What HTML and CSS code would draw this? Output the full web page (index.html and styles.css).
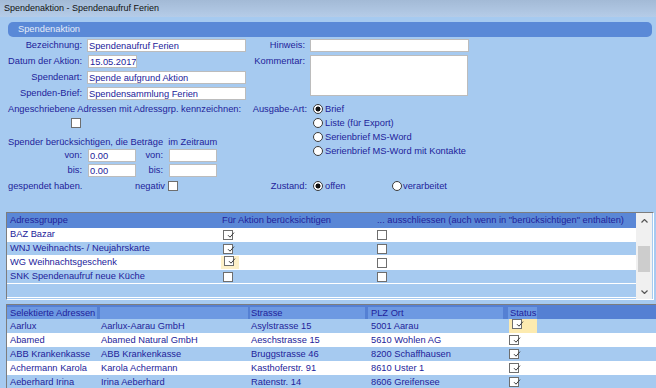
FILE: index.html
```html
<!DOCTYPE html>
<html lang="de">

<head>
    <meta charset="utf-8">
    <title>Spendenaktion - Spendenaufruf Ferien</title>
    <link rel="stylesheet" href="styles.css">
</head>

<body>

    <div class="titlebar">Spendenaktion - Spendenaufruf Ferien</div>

    <div class="section-bar">Spendenaktion</div>

    <!-- Kopfdaten -->
    <div class="top-grid">
        <label class="lbl">Bezeichnung:</label>
        <input class="inp wide" type="text" value="Spendenaufruf Ferien">
        <label class="lbl">Hinweis:</label>
        <input class="inp wide" type="text" value="">

        <label class="lbl">Datum der Aktion:</label>
        <input class="inp datum" type="text" value="15.05.2017">
        <label class="lbl">Kommentar:</label>
        <textarea class="inp kommentar"></textarea>

        <label class="lbl">Spendenart:</label>
        <input class="inp wide" type="text" value="Spende aufgrund Aktion">
        <span></span>

        <label class="lbl">Spenden-Brief:</label>
        <input class="inp wide" type="text" value="Spendensammlung Ferien">
        <span></span>
    </div>

    <div class="middle">
        <div class="mid-left">
            <div class="note">Angeschriebene Adressen mit Adressgrp. kennzeichnen:</div>
            <div class="cb-line"><span class="cb"></span></div>
            <div class="note note2">Spender berücksichtigen, die Beträge &nbsp;im Zeitraum</div>
            <div class="range-row">
                <span class="lbl">von:</span>
                <input class="inp small" type="text" value="0.00">
                <span class="lbl lbl2">von:</span>
                <input class="inp small" type="text" value="">
            </div>
            <div class="range-row">
                <span class="lbl">bis:</span>
                <input class="inp small" type="text" value="0.00">
                <span class="lbl lbl2">bis:</span>
                <input class="inp small" type="text" value="">
            </div>
            <div class="neg-row">
                <span class="neg-text">gespendet haben.</span>
                <span>negativ</span>
                <span class="cb"></span>
            </div>
        </div>

        <div class="mid-right">
            <div class="opt-row">
                <span class="opt-label">Ausgabe-Art:</span>
                <span class="rb on"></span><span class="opt-text">Brief</span>
            </div>
            <div class="opt-row">
                <span class="opt-label"></span>
                <span class="rb"></span><span class="opt-text">Liste (für Export)</span>
            </div>
            <div class="opt-row">
                <span class="opt-label"></span>
                <span class="rb"></span><span class="opt-text">Serienbrief MS-Word</span>
            </div>
            <div class="opt-row">
                <span class="opt-label"></span>
                <span class="rb"></span><span class="opt-text">Serienbrief MS-Word mit Kontakte</span>
            </div>
            <div class="opt-row zustand">
                <span class="opt-label">Zustand:</span>
                <span class="opt-item first"><span class="rb on"></span><span class="opt-text">offen</span></span>
                <span class="opt-item"><span class="rb"></span><span class="opt-text tight">verarbeitet</span></span>
            </div>
        </div>
    </div>

    <!-- Adressgruppen -->
    <div class="grid1">
        <div class="g1-main">
            <div class="g1-head">
                <span>Adressgruppe</span>
                <span>Für Aktion berücksichtigen</span>
                <span>... ausschliessen (auch wenn in "berücksichtigen" enthalten)</span>
            </div>
            <div class="g1-row">
                <span>BAZ Bazar</span>
                <span class="cell-cb"><span class="cb"><svg viewBox="0 0 8 8"><path d="M1 4.2l2 2 4-4.6"/></svg></span></span>
                <span class="cell-cb"><span class="cb"></span></span>
            </div>
            <div class="g1-row alt">
                <span>WNJ Weihnachts- / Neujahrskarte</span>
                <span class="cell-cb"><span class="cb"><svg viewBox="0 0 8 8"><path d="M1 4.2l2 2 4-4.6"/></svg></span></span>
                <span class="cell-cb"><span class="cb"></span></span>
            </div>
            <div class="g1-row">
                <span>WG Weihnachtsgeschenk</span>
                <span class="cell-cb"><span class="focus"><span class="cb"><svg viewBox="0 0 8 8"><path d="M1 4.2l2 2 4-4.6"/></svg></span></span></span>
                <span class="cell-cb"><span class="cb"></span></span>
            </div>
            <div class="g1-row alt">
                <span>SNK Spendenaufruf neue Küche</span>
                <span class="cell-cb"><span class="cb"></span></span>
                <span class="cell-cb"><span class="cb"></span></span>
            </div>
            <div class="g1-row alt"></div>
        </div>
        <div class="scrollbar">
            <span class="arrow"><svg viewBox="0 0 7 4"><path d="M0.5 3.5l3-3 3 3"/></svg></span>
            <span class="track"><span class="thumb"></span></span>
            <span class="arrow"><svg viewBox="0 0 7 4"><path d="M0.5 0.5l3 3 3-3"/></svg></span>
        </div>
    </div>

    <!-- Selektierte Adressen -->
    <div class="grid2">
        <div class="g2-head">
            <span class="hc">Selektierte Adressen</span>
            <span class="hc"></span>
            <span class="hc">Strasse</span>
            <span class="hc">PLZ Ort</span>
            <span class="hc">Status</span>
        </div>
        <div class="g2-row alt">
            <span>Aarlux</span><span>Aarlux-Aarau GmbH</span><span>Asylstrasse 15</span><span>5001 Aarau</span>
            <span class="status"><span class="focus2"><span class="cb"><svg viewBox="0 0 8 8"><path d="M1 4.2l2 2 4-4.6"/></svg></span></span></span>
        </div>
        <div class="g2-row">
            <span>Abamed</span><span>Abamed Natural GmbH</span><span>Aeschstrasse 15</span><span>5610 Wohlen AG</span>
            <span class="status"><span class="cb"><svg viewBox="0 0 8 8"><path d="M1 4.2l2 2 4-4.6"/></svg></span></span>
        </div>
        <div class="g2-row alt">
            <span>ABB Krankenkasse</span><span>ABB Krankenkasse</span><span>Bruggstrasse 46</span><span>8200 Schaffhausen</span>
            <span class="status"><span class="cb"><svg viewBox="0 0 8 8"><path d="M1 4.2l2 2 4-4.6"/></svg></span></span>
        </div>
        <div class="g2-row">
            <span>Achermann Karola</span><span>Karola Achermann</span><span>Kasthoferstr. 91</span><span>8610 Uster 1</span>
            <span class="status"><span class="cb"><svg viewBox="0 0 8 8"><path d="M1 4.2l2 2 4-4.6"/></svg></span></span>
        </div>
        <div class="g2-row alt">
            <span>Aeberhard Irina</span><span>Irina Aeberhard</span><span>Ratenstr. 14</span><span>8606 Greifensee</span>
            <span class="status"><span class="cb"><svg viewBox="0 0 8 8"><path d="M1 4.2l2 2 4-4.6"/></svg></span></span>
        </div>
    </div>

</body>

</html>
```

FILE: styles.css
```css
body {
    margin: 0;
    width: 656px;
    height: 388px;
    overflow: hidden;
    background-color: #a6caf0;
    font-family: "Liberation Sans", Arial, sans-serif;
    font-size: 9.3px;
    color: #22229a;
}

.titlebar {
    height: 17px;
    line-height: 16px;
    padding-left: 4px;
    box-sizing: border-box;
    font-size: 9px;
    color: #111;
    background: linear-gradient(#a3bad6, #b5cce8);
}

.section-bar {
    margin: 5px 4px 0 8px;
    height: 15px;
    line-height: 15px;
    padding-left: 10px;
    background-color: #5a89d7;
    color: #e4ebf8;
    border-radius: 5px;
}

/* Kopfdaten */

.top-grid {
    display: grid;
    grid-template-columns: 84px 162px 61px 164px;
    grid-template-rows: 16px 16px 16px 14px;
    padding-top: 2px;
}

.lbl {
    text-align: right;
    padding-right: 2px;
    line-height: 13px;
    white-space: nowrap;
}

.inp {
    display: block;
    box-sizing: border-box;
    height: 13px;
    margin: 0 0 0 3px;
    padding: 0 1px;
    border: 1px solid #bcbcbc;
    background: #fff;
    font: inherit;
    color: inherit;
    line-height: 11px;
    outline: none;
}

.wide {
    width: 159px;
}

.datum {
    width: 49px;
    margin-left: 4px;
    padding: 0 0 0 1px;
}

.kommentar {
    grid-column: 4;
    grid-row: 2 / span 3;
    width: 158px;
    height: 41px;
    resize: none;
}

/* mittlerer Bereich */

.middle {
    display: flex;
    padding-top: 1px;
}

.mid-left {
    width: 246px;
}

.note {
    padding-left: 8px;
    line-height: 14px;
    white-space: nowrap;
}

.note2 {
    margin-top: 5px;
}

.cb-line {
    height: 14px;
    padding: 2px 0 0 71px;
    box-sizing: border-box;
}

.range-row {
    display: flex;
    height: 15px;
}

.range-row .lbl {
    width: 82px;
}

.range-row .lbl2 {
    width: 27px;
}

.small {
    width: 48px;
    margin-left: 4px;
}

.neg-row {
    display: flex;
    align-items: center;
    width: 178px;
    height: 14px;
}

.neg-text {
    padding-left: 8px;
    margin-right: auto;
}

.neg-row .cb {
    margin-left: 3px;
}

.mid-right {
    flex: 1;
}

.opt-row {
    display: flex;
    align-items: center;
    height: 14px;
    white-space: nowrap;
}

.opt-label {
    width: 61px;
    text-align: right;
    flex-shrink: 0;
}

.opt-label + .rb {
    margin-left: 6px;
}

.opt-item {
    display: flex;
    align-items: center;
}

.opt-item.first {
    width: 79px;
    margin-left: 6px;
}

.opt-text {
    margin-left: 2px;
}

.opt-text.tight {
    margin-left: 1px;
}

.zustand {
    margin-top: 21px;
}

.rb {
    display: inline-block;
    flex-shrink: 0;
    width: 10px;
    height: 10px;
    box-sizing: border-box;
    border: 1px solid #3a3a3a;
    border-radius: 50%;
    background: #fff;
}

.rb.on {
    background: radial-gradient(circle, #111 0 2.2px, #fff 2.8px);
}

.cb {
    display: inline-block;
    width: 10px;
    height: 10px;
    box-sizing: border-box;
    border: 1px solid #6e6e6e;
    background: #fff;
    vertical-align: top;
}

.cb svg {
    display: block;
    width: 8px;
    height: 8px;
}

.cb path {
    fill: none;
    stroke: #3a3a3a;
    stroke-width: 1;
}

/* Tabelle Adressgruppen */

.grid1 {
    display: flex;
    margin: 19px 0 0 6px;
    width: 648px;
    height: 88px;
    box-sizing: border-box;
    border: 1px solid;
    border-color: #7d7d7d #fff #fff #7d7d7d;
}

.g1-main {
    flex: 1;
}

.g1-head,
.g1-row {
    display: grid;
    grid-template-columns: 212px 155px 1fr;
}

.g1-head {
    height: 15px;
    line-height: 15px;
    background-color: #5a87d6;
    white-space: nowrap;
}

.g1-head span {
    padding-left: 3px;
}

.g1-row {
    height: 14px;
    line-height: 13px;
    box-sizing: border-box;
    background: #fff;
    border-bottom: 1px solid #fff;
    align-items: center;
}

.g1-row.alt {
    background-color: #a6caf0;
}

.g1-row span:first-child {
    padding-left: 3px;
}

.cell-cb {
    display: flex;
    padding-left: 4px;
}

.g1-row .cell-cb:last-child {
    padding-left: 3px;
}

.focus {
    display: block;
    width: 15px;
    margin-left: -2px;
    padding-left: 2px;
    background-color: #fdf0c8;
}

.scrollbar {
    width: 16px;
    margin-right: 1px;
    display: flex;
    flex-direction: column;
    background-color: #f0f0f0;
}

.arrow {
    display: flex;
    justify-content: center;
    align-items: center;
    height: 15px;
}

.arrow svg {
    width: 7px;
    height: 4px;
}

.arrow path {
    fill: none;
    stroke: #555;
    stroke-width: 1.2;
}

.track {
    flex: 1;
    padding: 18px 2px 0 2px;
}

.thumb {
    display: block;
    height: 26px;
    background-color: #cdcdcd;
}

/* Tabelle selektierte Adressen */

.grid2 {
    margin: 4px 0 0 6px;
    border-top: 1px solid #7d7d7d;
    border-left: 1px solid #7d7d7d;
}

.g2-head,
.g2-row {
    display: grid;
    grid-template-columns: 93px 150px 118px 140px 29px 1fr;
}

.g2-head {
    height: 14px;
    padding-top: 2px;
    box-sizing: border-box;
    background-color: #5580d3;
}

.hc {
    background-color: #6d99e2;
    line-height: 12px;
    padding-left: 3px;
    white-space: nowrap;
}

.hc:nth-child(1) {
    margin-right: 3px;
}

.hc:nth-child(2) {
    margin-right: 2px;
    padding-left: 0;
}

.hc:nth-child(3) {
    margin-right: 3px;
    padding-left: 1px;
}

.hc:nth-child(4) {
    margin-right: 5px;
}

.hc:nth-child(5) {
    padding-left: 2px;
}

.g2-row {
    height: 14px;
    line-height: 14px;
    background: #fff;
    align-items: center;
    white-space: nowrap;
}

.g2-row.alt {
    background-color: #a6caf0;
}

.g2-row span:nth-child(1),
.g2-row span:nth-child(4) {
    padding-left: 3px;
}

.g2-row span:nth-child(2),
.g2-row span:nth-child(3),
.g2-row .status {
    padding-left: 1px;
}

.status {
    display: flex;
}

.focus2 {
    display: block;
    width: 28px;
    background-color: #fdebb0;
}
```
